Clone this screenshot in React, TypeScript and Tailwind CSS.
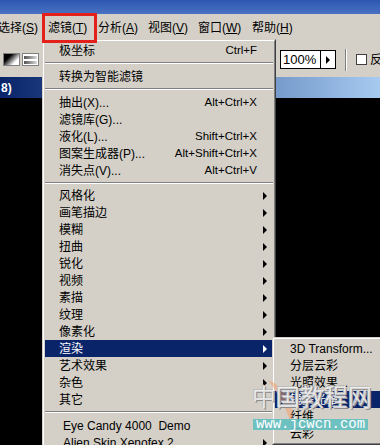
import React from "react";

type Item =
  | { sep: true; h?: string }
  | { label: string; key?: string; arrow?: boolean; active?: boolean; lead?: boolean };

const filterMenu: Item[] = [
  { label: "极坐标", key: "Ctrl+F" },
  { sep: true },
  { label: "转换为智能滤镜" },
  { sep: true },
  { label: "抽出(X)...", key: "Alt+Ctrl+X" },
  { label: "滤镜库(G)..." },
  { label: "液化(L)...", key: "Shift+Ctrl+X" },
  { label: "图案生成器(P)...", key: "Alt+Shift+Ctrl+X" },
  { label: "消失点(V)...", key: "Alt+Ctrl+V" },
  { sep: true, h: "h-[8px]" },
  { label: "风格化", arrow: true },
  { label: "画笔描边", arrow: true },
  { label: "模糊", arrow: true },
  { label: "扭曲", arrow: true },
  { label: "锐化", arrow: true },
  { label: "视频", arrow: true },
  { label: "素描", arrow: true },
  { label: "纹理", arrow: true },
  { label: "像素化", arrow: true },
  { label: "渲染", arrow: true, active: true },
  { label: "艺术效果", arrow: true },
  { label: "杂色", arrow: true },
  { label: "其它", arrow: true },
  { sep: true },
  { label: "Eye Candy 4000  Demo", arrow: true, lead: true },
  { label: "Alien Skin Xenofex 2", arrow: true, lead: true },
];

const renderMenu = ["3D Transform...", "分层云彩", "光照效果...", "镜头光晕...", "纤维...", "云彩"];

const Arrow = ({ white }: { white?: boolean }) => (
  <span
    className={`h-0 w-0 border-y-[4px] border-l-[4px] border-y-transparent ${
      white ? "border-l-white" : "border-l-black"
    }`}
  />
);

const MenuTitle = ({ name, k, className = "" }: { name: string; k: string; className?: string }) => (
  <span className={`w-[50px] shrink-0 whitespace-nowrap ${className}`}>
    {name}(<span className="underline">{k}</span>)
  </span>
);

export default function App() {
  return (
    <div className="relative flex h-[445px] w-[380px] flex-col overflow-hidden bg-black font-[Liberation_Sans,Noto_Sans_CJK_SC,sans-serif] text-[12px] text-black">
      {/* app title bar */}
      <div className="h-[14px] bg-gradient-to-b from-[#2d56b2] to-[#4a72c2]" />

      {/* menu bar */}
      <div className="-ml-[2px] flex h-[28px] items-center bg-[#d4d0c8]">
        <MenuTitle name="选择" k="S" />
        <MenuTitle name="滤镜" k="T" />
        <MenuTitle name="分析" k="A" />
        <MenuTitle name="视图" k="V" />
        <MenuTitle name="窗口" k="W" />
        <MenuTitle name="帮助" k="H" className="ml-[4px]" />
      </div>

      {/* options bar */}
      <div className="flex h-[35px] items-center bg-[#d4d0c8]">
        <div className="flex items-center gap-[2px] pl-[3px]">
          <span className="h-[13px] w-[17px] border border-[#808080] bg-[linear-gradient(135deg,#000_30%,#fff_75%)]" />
          <span className="flex h-[13px] w-[17px] flex-col justify-center gap-[2px] border border-[#808080] bg-white px-[1px]">
            <span className="h-[3px] bg-gradient-to-r from-[#555] to-[#ddd]" />
            <span className="h-[3px] bg-gradient-to-r from-[#555] to-[#ddd]" />
          </span>
        </div>
        <div className="ml-auto flex items-center">
          <span className="mr-[4px]">:</span>
          <div className="flex h-[19px] w-[56px] items-center border border-black bg-white">
            <span className="flex-1 pl-[2px] text-[13px]">100%</span>
            <span className="flex h-full w-[15px] items-center justify-center border-l border-black">
              <Arrow />
            </span>
          </div>
          <span className="ml-[9px] h-[22px] w-[2px] border-l border-[#808080] bg-white" />
          <span className="ml-[9px] h-[11px] w-[11px] border border-[#404040] bg-white" />
          <span className="ml-[3px] w-[10px] overflow-hidden">反</span>
        </div>
      </div>

      {/* document title bar */}
      <div className="flex h-[21px] items-center bg-gradient-to-r from-[#0a246a] to-[#a6caf0] pl-[1px] text-[12px] font-bold text-white">
        8)
      </div>

      {/* canvas */}
      <div className="flex-1 bg-black" />

      {/* red annotation box */}
      <div className="absolute left-[42px] top-[13px] z-30 h-[30px] w-[55px] border-[3px] border-[#e3201b]" />

      {/* filter menu */}
      <div className="absolute left-[42px] top-[39px] z-10 w-[234px] border border-b-[#404040] border-l-[#d4d0c8] border-r-[#404040] border-t-[#d4d0c8] bg-[#d4d0c8]">
        <div className="border border-b-[#808080] border-l-white border-r-[#808080] border-t-white p-[1px]">
          {filterMenu.map((it, i) =>
            "sep" in it ? (
              <div key={i} className={`${it.h ?? "h-[9px]"} pt-[3px]`}>
                <div className="border-b border-t border-b-white border-t-[#808080]" />
              </div>
            ) : (
              <div
                key={i}
                className={`flex h-[17px] items-center pl-[14px] ${
                  it.active ? "bg-[#0a246a] text-white" : ""
                }`}
              >
                <span className={`flex-1 whitespace-pre ${it.lead ? "pl-[4px]" : ""}`}>{it.label}</span>
                {it.key && <span className="whitespace-nowrap text-[11.5px]">{it.key}</span>}
                <span className="flex w-[16px] items-center pl-[6px]">
                  {it.arrow && <Arrow white={it.active} />}
                </span>
              </div>
            )
          )}
        </div>
      </div>

      {/* render submenu */}
      <div className="absolute left-[272px] top-[337px] z-10 w-[120px] border border-b-[#404040] border-l-[#d4d0c8] border-r-[#404040] border-t-[#d4d0c8] bg-[#d4d0c8]">
        <div className="border border-b-[#808080] border-l-white border-r-[#808080] border-t-white p-[1px]">
          {renderMenu.map((label, i) => (
            <div
              key={label}
              className={`flex h-[17px] items-center pl-[15px] ${i === 3 ? "bg-[#0a246a] text-white" : ""}`}
            >
              {label}
            </div>
          ))}
        </div>
      </div>

      {/* watermark */}
      <svg className="absolute left-[262px] top-[372px] z-20" width="60" height="60" viewBox="0 0 60 60">
        <path d="M6 8 C 22 14, 34 30, 30 56 C 26 40, 18 24, 6 8 Z" fill="#f0a070" opacity="0.55" />
      </svg>
      <div className="absolute left-[252px] top-[384px] z-20 flex text-[24px] leading-[28px] text-white/75 [text-shadow:1px_1px_0_#8a8a8a,-1px_-1px_0_#bdbdbd]">
        中国教程网
      </div>
      <div className="absolute left-[253px] top-[419px] z-20 flex h-[11px] w-[115px] items-center justify-center bg-[#62bfc0]/90 font-[Liberation_Mono,monospace] text-[14px] leading-[11px] text-white">
        www.jcwcn.com
      </div>
    </div>
  );
}
